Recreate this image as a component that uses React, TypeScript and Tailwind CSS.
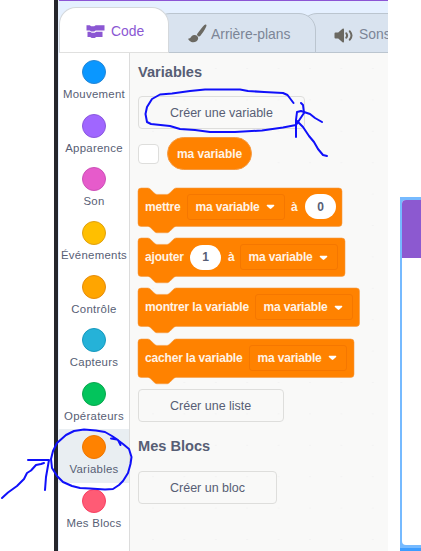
import type { ReactNode } from 'react';

const categories = [
  { name: 'Mouvement', fill: 'bg-[#0a97ff]', edge: 'border-[#2586d6]' },
  { name: 'Apparence', fill: 'bg-[#a066ff]', edge: 'border-[#8a58dd]' },
  { name: 'Son', fill: 'bg-[#e65bcb]', edge: 'border-[#cc50b8]' },
  { name: 'Événements', fill: 'bg-[#ffbf00]', edge: 'border-[#e0a010]' },
  { name: 'Contrôle', fill: 'bg-[#ffa500]', edge: 'border-[#e58c0c]' },
  { name: 'Capteurs', fill: 'bg-[#25b2d8]', edge: 'border-[#1699be]' },
  { name: 'Opérateurs', fill: 'bg-[#03c45c]', edge: 'border-[#0aa74e]' },
  { name: 'Variables', fill: 'bg-[#ff8200]', edge: 'border-[#ef7600]', selected: true },
  { name: 'Mes Blocs', fill: 'bg-[#ff5b75]', edge: 'border-[#f73f62]' },
];

function Block({ width, children }: { width: number; children: ReactNode }) {
  const w = width / 0.8;
  const d = `M0,4 A4,4 0 0,1 4,0 H12 c2,0 3,1 4,2 l4,4 c1,1 2,2 4,2 h12 c2,0 3,-1 4,-2 l4,-4 c1,-1 2,-2 4,-2 H${w - 4} a4,4 0 0,1 4,4 v40 a4,4 0 0,1 -4,4 H48 c-2,0 -3,1 -4,2 l-4,4 c-1,1 -2,2 -4,2 h-12 c-2,0 -3,-1 -4,-2 l-4,-4 c-1,-1 -2,-2 -4,-2 H4 a4,4 0 0,1 -4,-4 z`;
  return (
    <div className="relative mb-[11.9px] h-[38.4px]" style={{ width }}>
      <svg className="absolute left-0 top-0 h-[46px] w-full overflow-visible">
        <path d={d} transform="scale(.8)" fill="#ff8200" stroke="#f59a42" strokeWidth=".7" />
      </svg>
      <div className="relative flex h-full items-center whitespace-nowrap pl-[7px] text-[12px] font-bold tracking-[-0.18px] text-[#fff3e6]">
        {children}
      </div>
    </div>
  );
}

function Dropdown() {
  return (
    <span className="flex h-[26px] w-[98px] shrink-0 items-center rounded-[3px] border border-[#f57700] pl-[7.5px]">
      ma variable
      <svg className="ml-[6px] mt-px" width="9" height="6" viewBox="0 0 9 6">
        <path d="M1.2 .7h6.6q1 .3 .3 1.2L5.3 4.6q-.8.7-1.6 0L.9 1.9Q.2 1 1.2.7z" fill="#fff" />
      </svg>
    </span>
  );
}

function Value({ children }: { children: ReactNode }) {
  return (
    <span className="flex h-[25px] w-[31px] shrink-0 items-center justify-center rounded-full bg-white text-[12px] text-[#575e75]">
      {children}
    </span>
  );
}

function PaletteButton({ className, children }: { className: string; children: ReactNode }) {
  return (
    <button
      className={`flex h-[33px] items-center whitespace-nowrap rounded-[4px] border border-[#dededc] pl-[31px] pt-[2px] text-[12.5px] text-[#575e75] ${className}`}
    >
      {children}
    </button>
  );
}

function Tabs() {
  return (
    <div className="flex h-[53px] items-end overflow-hidden border-t border-[#8c55d5] bg-[#e5f0ff] text-[13.9px] whitespace-nowrap">
      <div className="z-10 flex h-[46px] w-[110px] shrink-0 items-center rounded-t-[17px] border border-b-[#e0e0df] border-[#d4d8dc] bg-white pl-[26px] text-[#8b57d3]">
        <svg className="mr-[6px] mt-[2px]" width="19" height="15" viewBox="0 0 19 15">
          <path
            d="M.5 1.2h3.2l1.500 1h3l1.500-1h8.800v5.200H9.700l-1.500 1h-3l-1.500-1H.5zM1.500 7.800h2.700l1.500 1h3l1.500-1h6.300v5.200H10.200l-1.500 1h-3l-1.500-1H1.500z"
            fill="#8b57d3"
          />
        </svg>
        <span className="pt-[2px]">Code</span>
      </div>
      <div className="z-[5] -ml-[16px] flex h-[40px] w-[163px] shrink-0 items-center rounded-t-[17px] border border-[#bbc5cf] bg-[#d9e3ef] pl-[34px] text-[#7c8596]">
        <svg className="mr-[4px] mt-px" width="19" height="19" viewBox="0 0 19 19" fill="#6b6962">
          <path d="M18 .6c.8.5.5 1.5-.1 2.7-1.3 2.7-3.6 6.3-5.5 8.5-.8 1-1.5 1-2.5.1-1-.8-1.2-1.5-.4-2.5C11.7 6.600 14.200 3.300 16.400 1.100c.6-.6 1.100-.8 1.600-.5zM6.500 11.100c2.200.1 3.700 1.500 3.700 3.200-.2 3.700-5.700 5.200-8.400 2.700-.7-.6-1.600-1.300-1.500-2.100.1-.7 1.300-.1 2-.8.8-1.200 2.200-3.200 4.200-3z" />
        </svg>
        <span className="pt-[2px]">Arrière-plans</span>
      </div>
      <div className="-ml-[16px] flex h-[40px] w-[140px] shrink-0 items-center rounded-t-[17px] border border-[#bbc5cf] bg-[#d9e3ef] pl-[33px] text-[#7c8596]">
        <svg className="mr-[6px] mt-[4px]" width="19" height="15" viewBox="0 0 19 15">
          <path d="M1.500 4.500h2.700L8.500.8q1.500-.9 1.500.7v12q0 1.600-1.500.7L4.200 10.500H1.500Q.5 10.500.5 9.500v-4q0-1 1-1z" fill="#6b6962" />
          <path d="M12.300 5.300q1.600 2.200 0 4.400M15.800 3.300q3.400 4.200 0 8.400" fill="none" stroke="#6b6962" strokeWidth="2" strokeLinecap="round" />
        </svg>
        <span className="pt-[2px]">Sons</span>
      </div>
    </div>
  );
}

function Annotations() {
  return (
    <svg
      className="pointer-events-none absolute inset-0 z-20"
      width="421"
      height="551"
      fill="none"
      stroke="#1010fa"
      strokeWidth="2"
      strokeLinecap="round"
      strokeLinejoin="round"
    >
      <path d="M293.500 103L287.500 95 283 93 264 92 248 91 240 89.500H205L190 91 172 93.500 160 94.500 152 99 147 107 145.500 114 147 122 151 124 170 126 180 129 195 130 210 132H235L262 130.500 283 127.500 296 125 300 119 304 113 303 105 301 103" />
      <path d="M296 137V120L297 112 301 111 310 114 315 118 322 122M297 121L303 127 309 136 314 142 318 149 323 155 327 156" />
      <path d="M120.500 445L118 440 112 436 105 432 96 430.500 84 429.500 74 431 66 435 57 443 53 451 51 459 52 468 57 476 63 482 72 486 80 488 90 488.500 105 489.500 113 489 119 485 123 481 128 473 130.500 464 131.500 457 129 449 123 444 117 439.500 111 438.500" />
      <path d="M2 498L8 492.500 17 486 24 479 27 473 31 470.500 36 465 41 464 44 463M28 460H49L46 477 45 490" />
    </svg>
  );
}

export default function App() {
  return (
    <div className="relative flex h-[551px] w-[421px] overflow-hidden bg-white pl-[54px] font-['Liberation_Sans',Arial,sans-serif]">
      <div className="w-[334px] border-l-4 border-[#25262c] bg-[#e5f0ff] pl-px">
        <Tabs />
        <main className="flex h-[498px]">
          <nav className="w-[71px] shrink-0 border-r border-[#dcdcdc] bg-white pt-px">
            {categories.map((c) => (
              <div
                key={c.name}
                className={`flex h-[53.65px] flex-col items-center pt-[6px] ${c.selected ? 'bg-[#e9eef2]' : ''}`}
              >
                <span className={`h-[24px] w-[24px] shrink-0 rounded-full border ${c.fill} ${c.edge}`} />
                <span className="mt-[3px] whitespace-nowrap text-[11.4px] leading-[14px] tracking-[0.28px] text-[#575e75]">
                  {c.name}
                </span>
              </div>
            ))}
          </nav>
          <section className="relative min-w-0 flex-1 bg-[#f9f9f8] pl-2">
            <svg className="absolute inset-0 h-full w-full">
              <defs>
                <pattern id="grid" x="22" y="15" width="31.4" height="31.4" patternUnits="userSpaceOnUse">
                  <rect width="2" height="1" fill="#f3f3f3" />
                </pattern>
              </defs>
              <rect width="100%" height="100%" fill="url(#grid)" />
            </svg>
            <div className="relative pt-[9px]">
              <h2 className="h-[34px] text-[14.6px] font-bold leading-[20px] text-[#575e75]">Variables</h2>
              <PaletteButton className="w-[167px]">Créer une variable</PaletteButton>
              <div className="mt-[8px] flex h-[33px] items-center">
                <span className="h-[20px] w-[21px] rounded-[4px] border border-[#dededc] bg-white" />
                <span className="ml-[8px] flex h-[33px] w-[85px] items-center justify-center whitespace-nowrap rounded-full border border-[#f59a42] bg-[#ff8200] pt-px text-[12px] font-bold tracking-[-0.1px] text-[#fff3e6]">
                  ma variable
                </span>
              </div>
              <div className="mt-[17.700px] h-[201.300px]">
                <Block width={204}>
                  <span className="w-[42px] shrink-0">mettre</span>
                  <Dropdown />
                  <span className="w-[20px] shrink-0 pl-[6px]">à</span>
                  <Value>0</Value>
                </Block>
                <Block width={207}>
                  <span className="w-[45px] shrink-0">ajouter</span>
                  <Value>1</Value>
                  <span className="w-[19px] shrink-0 pl-[7px]">à</span>
                  <Dropdown />
                </Block>
                <Block width={221.5}>
                  <span className="w-[110px] shrink-0">montrer la variable</span>
                  <Dropdown />
                </Block>
                <Block width={216}>
                  <span className="w-[104px] shrink-0">cacher la variable</span>
                  <Dropdown />
                </Block>
              </div>
              <PaletteButton className="w-[146px]">Créer une liste</PaletteButton>
              <h2 className="mt-[14px] h-[35px] text-[14.6px] font-bold leading-[20px] text-[#575e75]">Mes Blocs</h2>
              <PaletteButton className="w-[139px]">Créer un bloc</PaletteButton>
            </div>
          </section>
        </main>
      </div>
      <aside className="ml-3 mt-[197px] h-[354px] w-[21px] border-b-[3px] border-[#3d9dff] bg-[#76baff] pb-[3px] pl-[2px] pt-[3px]">
        <div className="flex h-full flex-col overflow-hidden rounded-l-[4px] bg-white">
          <div className="h-[58px] bg-[#8c59d0]" />
        </div>
      </aside>
      <Annotations />
    </div>
  );
}
